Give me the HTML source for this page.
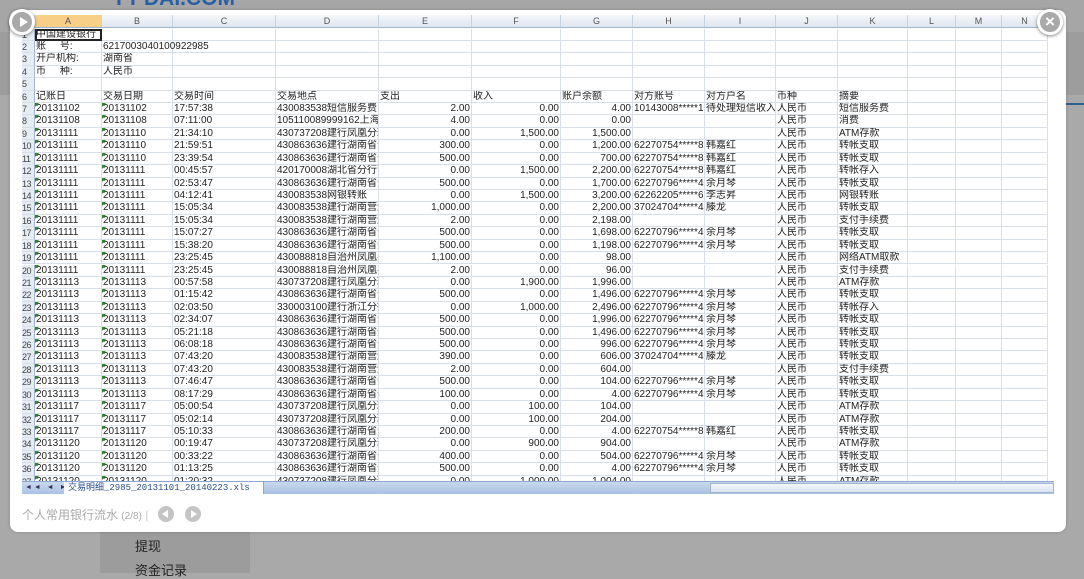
<!DOCTYPE html>
<html><head><meta charset="utf-8"><style>
*{margin:0;padding:0;box-sizing:border-box}
body{width:1084px;height:573px;overflow:hidden;background:#a9a9a9;font-family:"Liberation Sans","Noto Sans CJK SC",sans-serif;position:relative}
.topband{position:absolute;left:0;top:0;width:1084px;height:32px;background:#a6a6a6}
.midband{position:absolute;left:0;top:32px;width:1084px;height:63px;background:#9d9d9d}
.logo{position:absolute;left:116px;top:-13px;font:bold 21px "Liberation Sans",sans-serif;color:#2a5fa8}
.blue{position:absolute;left:1066px;top:103px;width:18px;height:2px;background:#2f5f8a}
.col2{position:absolute;left:100px;top:532px;width:150px;height:41px;background:#9c9c9c}
.menu{position:absolute;left:135px;font-size:13px;color:#222}
.modal{position:absolute;left:10px;top:10px;width:1056px;height:522px;background:#fff;border-radius:8px;box-shadow:0 0 3px rgba(0,0,0,.2)}
.sheet{position:absolute;overflow:hidden;background:#fff}
.hdr{position:absolute;left:0;top:0;width:1032px;display:flex;background:linear-gradient(#f5f7fa,#dfe6ef);border-bottom:1px solid #9eb6ce;font-size:9px;color:#555;overflow:hidden}
.hdr span{text-align:center;border-right:1px solid #c5d2e0;flex:none}
.hdr span.sel{background:#f7cf86}
.row{position:absolute;left:0;height:12.42px;width:1032px;display:flex;font-size:10px;line-height:12px;color:#222}
.row span{flex:none;border-right:1px solid #d8dfe9;border-bottom:1px solid #d8dfe9;white-space:nowrap;overflow:hidden;padding-left:1px;position:relative}
.row span:first-child{background:#e6ecf4;color:#444;border-right:1px solid #9eb6ce;padding-left:0;font-size:9px;letter-spacing:-0.5px;line-height:12px}
span:nth-child(1){width:13px}
span:nth-child(2){width:67px}span:nth-child(3){width:71px}span:nth-child(4){width:103px}span:nth-child(5){width:103px}
span:nth-child(6){width:93px}span:nth-child(7){width:89px}span:nth-child(8){width:72px}span:nth-child(9){width:72px}
span:nth-child(10){width:71px}span:nth-child(11){width:62px}span:nth-child(12){width:70px}span:nth-child(13){width:48px}
span:nth-child(14){width:46px}span:nth-child(15){width:46px}
.row span:nth-child(6),.row span:nth-child(7),.row span:nth-child(8){text-align:right;padding-right:1px}
.g span:nth-child(2)::before,.g span:nth-child(3)::before{content:"";position:absolute;left:0;top:0;border-top:4px solid #2a8a2a;border-right:4px solid transparent}
.bar{position:absolute;left:0;width:1032px;height:13px;background:linear-gradient(#c9d9ee,#a9c2e2);border-top:1px solid #8aa7cf}
.tab{position:absolute;left:42px;top:0;height:12px;width:200px;background:#fff;font:9px "Liberation Mono","Noto Sans CJK SC",monospace;color:#2a4f8a;line-height:12px;padding-left:4px;border-right:1px solid #8aa7cf;white-space:nowrap;overflow:hidden}
.nav{position:absolute;left:3px;top:2px;font-size:7px;color:#335;letter-spacing:2px;white-space:nowrap}
.hs{position:absolute;left:688px;top:1px;width:344px;height:10px;background:linear-gradient(#f6f8fb,#d9e2ee);border:1px solid #9db3cf}
.cap{position:absolute;left:22px;top:506px;font-size:12px;color:#aaa}
.cap small{font-size:10px;color:#aaa}
.cb{position:absolute;width:16px;height:16px;border-radius:50%;background:#c4c4c4;top:506px}
.cb::after{content:"";position:absolute;top:4px;border-top:4px solid transparent;border-bottom:4px solid transparent}
.cbl::after{left:4px;border-right:6px solid #fff}
.cbr::after{left:6px;border-left:6px solid #fff}
.circ{position:absolute;width:26px;height:26px;border-radius:50%;background:#a9a9a9;border:3px solid #fff;box-shadow:0 1px 3px rgba(0,0,0,.5)}
</style></head><body>
<div class="topband"></div><div class="midband"></div>
<div class="logo">PPDAI.COM</div>
<div class="blue"></div>
<div class="col2"></div>
<div class="menu" style="top:536px">提现</div>
<div class="menu" style="top:560px">资金记录</div>
<div class="modal"></div>
<div class="sheet" style="left:22px;top:15px;width:1032px;height:479px">
<div class="hdr" style="top:0;height:13px;line-height:13px"><span style="width:13px"></span><span class="sel">A</span><span>B</span><span>C</span><span>D</span><span>E</span><span>F</span><span>G</span><span>H</span><span>I</span><span>J</span><span>K</span><span>L</span><span>M</span><span>N</span></div>
<div class="row" style="top:13.5px"><span>1</span><span style="outline:2px solid #222;outline-offset:-2px">中国建设银行</span><span></span><span></span><span></span><span></span><span></span><span></span><span></span><span></span><span></span><span></span><span></span><span></span><span></span></div>
<div class="row" style="top:25.9px"><span>2</span><span>账&nbsp;&nbsp;&nbsp;&nbsp;&nbsp;号:</span><span style="overflow:visible">6217003040100922985</span><span></span><span></span><span></span><span></span><span></span><span></span><span></span><span></span><span></span><span></span><span></span><span></span></div>
<div class="row" style="top:38.3px"><span>3</span><span>开户机构:</span><span>湖南省</span><span></span><span></span><span></span><span></span><span></span><span></span><span></span><span></span><span></span><span></span><span></span><span></span></div>
<div class="row" style="top:50.8px"><span>4</span><span>币&nbsp;&nbsp;&nbsp;&nbsp;&nbsp;种:</span><span>人民币</span><span></span><span></span><span></span><span></span><span></span><span></span><span></span><span></span><span></span><span></span><span></span><span></span></div>
<div class="row" style="top:63.2px"><span>5</span><span></span><span></span><span></span><span></span><span></span><span></span><span></span><span></span><span></span><span></span><span></span><span></span><span></span><span></span></div>
<div class="row" style="top:75.6px"><span>6</span><span>记账日</span><span>交易日期</span><span>交易时间</span><span>交易地点</span><span style="text-align:left">支出</span><span style="text-align:left">收入</span><span style="text-align:left">账户余额</span><span>对方账号</span><span>对方户名</span><span>币种</span><span>摘要</span><span></span><span></span><span></span></div>
<div class="row g" style="top:88px"><span>7</span><span>20131102</span><span>20131102</span><span>17:57:38</span><span>430083538短信服务费</span><span>2.00</span><span>0.00</span><span>4.00</span><span>10143008*****13</span><span>待处理短信收入</span><span>人民币</span><span>短信服务费</span><span></span><span></span><span></span></div>
<div class="row g" style="top:100.4px"><span>8</span><span>20131108</span><span>20131108</span><span>07:11:00</span><span>105110089999162上海银</span><span>4.00</span><span>0.00</span><span>0.00</span><span></span><span></span><span>人民币</span><span>消费</span><span></span><span></span><span></span></div>
<div class="row g" style="top:112.8px"><span>9</span><span>20131111</span><span>20131110</span><span>21:34:10</span><span>430737208建行凤凰分理</span><span>0.00</span><span>1,500.00</span><span>1,500.00</span><span></span><span></span><span>人民币</span><span>ATM存款</span><span></span><span></span><span></span></div>
<div class="row g" style="top:125.3px"><span>10</span><span>20131111</span><span>20131110</span><span>21:59:51</span><span>430863636建行湖南省分</span><span>300.00</span><span>0.00</span><span>1,200.00</span><span>62270754*****89</span><span>韩嘉红</span><span>人民币</span><span>转帐支取</span><span></span><span></span><span></span></div>
<div class="row g" style="top:137.7px"><span>11</span><span>20131111</span><span>20131110</span><span>23:39:54</span><span>430863636建行湖南省分</span><span>500.00</span><span>0.00</span><span>700.00</span><span>62270754*****89</span><span>韩嘉红</span><span>人民币</span><span>转帐支取</span><span></span><span></span><span></span></div>
<div class="row g" style="top:150.1px"><span>12</span><span>20131111</span><span>20131111</span><span>00:45:57</span><span>420170008湖北省分行营</span><span>0.00</span><span>1,500.00</span><span>2,200.00</span><span>62270754*****89</span><span>韩嘉红</span><span>人民币</span><span>转帐存入</span><span></span><span></span><span></span></div>
<div class="row g" style="top:162.5px"><span>13</span><span>20131111</span><span>20131111</span><span>02:53:47</span><span>430863636建行湖南省分</span><span>500.00</span><span>0.00</span><span>1,700.00</span><span>62270796*****40</span><span>余月琴</span><span>人民币</span><span>转帐支取</span><span></span><span></span><span></span></div>
<div class="row g" style="top:174.9px"><span>14</span><span>20131111</span><span>20131111</span><span>04:12:41</span><span>430083538网银转账</span><span>0.00</span><span>1,500.00</span><span>3,200.00</span><span>62262205*****62</span><span>李志昇</span><span>人民币</span><span>网银转账</span><span></span><span></span><span></span></div>
<div class="row g" style="top:187.4px"><span>15</span><span>20131111</span><span>20131111</span><span>15:05:34</span><span>430083538建行湖南营运</span><span>1,000.00</span><span>0.00</span><span>2,200.00</span><span>37024704*****42</span><span>滕龙</span><span>人民币</span><span>转帐支取</span><span></span><span></span><span></span></div>
<div class="row g" style="top:199.8px"><span>16</span><span>20131111</span><span>20131111</span><span>15:05:34</span><span>430083538建行湖南营运</span><span>2.00</span><span>0.00</span><span>2,198.00</span><span></span><span></span><span>人民币</span><span>支付手续费</span><span></span><span></span><span></span></div>
<div class="row g" style="top:212.2px"><span>17</span><span>20131111</span><span>20131111</span><span>15:07:27</span><span>430863636建行湖南省分</span><span>500.00</span><span>0.00</span><span>1,698.00</span><span>62270796*****40</span><span>余月琴</span><span>人民币</span><span>转帐支取</span><span></span><span></span><span></span></div>
<div class="row g" style="top:224.6px"><span>18</span><span>20131111</span><span>20131111</span><span>15:38:20</span><span>430863636建行湖南省分</span><span>500.00</span><span>0.00</span><span>1,198.00</span><span>62270796*****40</span><span>余月琴</span><span>人民币</span><span>转帐支取</span><span></span><span></span><span></span></div>
<div class="row g" style="top:237px"><span>19</span><span>20131111</span><span>20131111</span><span>23:25:45</span><span>430088818自治州凤凰县</span><span>1,100.00</span><span>0.00</span><span>98.00</span><span></span><span></span><span>人民币</span><span>网络ATM取款</span><span></span><span></span><span></span></div>
<div class="row g" style="top:249.5px"><span>20</span><span>20131111</span><span>20131111</span><span>23:25:45</span><span>430088818自治州凤凰县</span><span>2.00</span><span>0.00</span><span>96.00</span><span></span><span></span><span>人民币</span><span>支付手续费</span><span></span><span></span><span></span></div>
<div class="row g" style="top:261.9px"><span>21</span><span>20131113</span><span>20131113</span><span>00:57:58</span><span>430737208建行凤凰分理</span><span>0.00</span><span>1,900.00</span><span>1,996.00</span><span></span><span></span><span>人民币</span><span>ATM存款</span><span></span><span></span><span></span></div>
<div class="row g" style="top:274.3px"><span>22</span><span>20131113</span><span>20131113</span><span>01:15:42</span><span>430863636建行湖南省分</span><span>500.00</span><span>0.00</span><span>1,496.00</span><span>62270796*****40</span><span>余月琴</span><span>人民币</span><span>转帐支取</span><span></span><span></span><span></span></div>
<div class="row g" style="top:286.7px"><span>23</span><span>20131113</span><span>20131113</span><span>02:03:50</span><span>330003100建行浙江分行</span><span>0.00</span><span>1,000.00</span><span>2,496.00</span><span>62270796*****40</span><span>余月琴</span><span>人民币</span><span>转帐存入</span><span></span><span></span><span></span></div>
<div class="row g" style="top:299.1px"><span>24</span><span>20131113</span><span>20131113</span><span>02:34:07</span><span>430863636建行湖南省分</span><span>500.00</span><span>0.00</span><span>1,996.00</span><span>62270796*****40</span><span>余月琴</span><span>人民币</span><span>转帐支取</span><span></span><span></span><span></span></div>
<div class="row g" style="top:311.6px"><span>25</span><span>20131113</span><span>20131113</span><span>05:21:18</span><span>430863636建行湖南省分</span><span>500.00</span><span>0.00</span><span>1,496.00</span><span>62270796*****40</span><span>余月琴</span><span>人民币</span><span>转帐支取</span><span></span><span></span><span></span></div>
<div class="row g" style="top:324px"><span>26</span><span>20131113</span><span>20131113</span><span>06:08:18</span><span>430863636建行湖南省分</span><span>500.00</span><span>0.00</span><span>996.00</span><span>62270796*****40</span><span>余月琴</span><span>人民币</span><span>转帐支取</span><span></span><span></span><span></span></div>
<div class="row g" style="top:336.4px"><span>27</span><span>20131113</span><span>20131113</span><span>07:43:20</span><span>430083538建行湖南营运</span><span>390.00</span><span>0.00</span><span>606.00</span><span>37024704*****42</span><span>滕龙</span><span>人民币</span><span>转帐支取</span><span></span><span></span><span></span></div>
<div class="row g" style="top:348.8px"><span>28</span><span>20131113</span><span>20131113</span><span>07:43:20</span><span>430083538建行湖南营运</span><span>2.00</span><span>0.00</span><span>604.00</span><span></span><span></span><span>人民币</span><span>支付手续费</span><span></span><span></span><span></span></div>
<div class="row g" style="top:361.2px"><span>29</span><span>20131113</span><span>20131113</span><span>07:46:47</span><span>430863636建行湖南省分</span><span>500.00</span><span>0.00</span><span>104.00</span><span>62270796*****40</span><span>余月琴</span><span>人民币</span><span>转帐支取</span><span></span><span></span><span></span></div>
<div class="row g" style="top:373.7px"><span>30</span><span>20131113</span><span>20131113</span><span>08:17:29</span><span>430863636建行湖南省分</span><span>100.00</span><span>0.00</span><span>4.00</span><span>62270796*****40</span><span>余月琴</span><span>人民币</span><span>转帐支取</span><span></span><span></span><span></span></div>
<div class="row g" style="top:386.1px"><span>31</span><span>20131117</span><span>20131117</span><span>05:00:54</span><span>430737208建行凤凰分理</span><span>0.00</span><span>100.00</span><span>104.00</span><span></span><span></span><span>人民币</span><span>ATM存款</span><span></span><span></span><span></span></div>
<div class="row g" style="top:398.5px"><span>32</span><span>20131117</span><span>20131117</span><span>05:02:14</span><span>430737208建行凤凰分理</span><span>0.00</span><span>100.00</span><span>204.00</span><span></span><span></span><span>人民币</span><span>ATM存款</span><span></span><span></span><span></span></div>
<div class="row g" style="top:410.9px"><span>33</span><span>20131117</span><span>20131117</span><span>05:10:33</span><span>430863636建行湖南省分</span><span>200.00</span><span>0.00</span><span>4.00</span><span>62270754*****89</span><span>韩嘉红</span><span>人民币</span><span>转帐支取</span><span></span><span></span><span></span></div>
<div class="row g" style="top:423.3px"><span>34</span><span>20131120</span><span>20131120</span><span>00:19:47</span><span>430737208建行凤凰分理</span><span>0.00</span><span>900.00</span><span>904.00</span><span></span><span></span><span>人民币</span><span>ATM存款</span><span></span><span></span><span></span></div>
<div class="row g" style="top:435.8px"><span>35</span><span>20131120</span><span>20131120</span><span>00:33:22</span><span>430863636建行湖南省分</span><span>400.00</span><span>0.00</span><span>504.00</span><span>62270796*****40</span><span>余月琴</span><span>人民币</span><span>转帐支取</span><span></span><span></span><span></span></div>
<div class="row g" style="top:448.2px"><span>36</span><span>20131120</span><span>20131120</span><span>01:13:25</span><span>430863636建行湖南省分</span><span>500.00</span><span>0.00</span><span>4.00</span><span>62270796*****40</span><span>余月琴</span><span>人民币</span><span>转帐支取</span><span></span><span></span><span></span></div>
<div class="row g" style="top:460.6px"><span>37</span><span>20131120</span><span>20131120</span><span>01:20:32</span><span>430737208建行凤凰分理</span><span>0.00</span><span>1,000.00</span><span>1,004.00</span><span></span><span></span><span>人民币</span><span>ATM存款</span><span></span><span></span><span></span></div>
<div class="bar" style="top:466px"><div class="nav">◄◄ ◄ ► ►►</div><div class="tab">交易明细_2985_20131101_20140223.xls</div><div class="hs"></div></div>
</div>
<div class="cap">个人常用银行流水 <small>(2/8)</small> <span style="color:#ccc">|</span></div>
<div class="cb cbl" style="left:158px"></div>
<div class="cb cbr" style="left:185px"></div>
<div class="circ" style="left:9px;top:9px"><div style="position:absolute;left:8px;top:5px;border-top:5px solid transparent;border-bottom:5px solid transparent;border-left:8px solid #fff"></div></div>
<div class="circ" style="left:1037px;top:9px;color:#fff;font:bold 17px 'Liberation Sans',sans-serif;text-align:center;line-height:20px">×</div>
</body></html>
